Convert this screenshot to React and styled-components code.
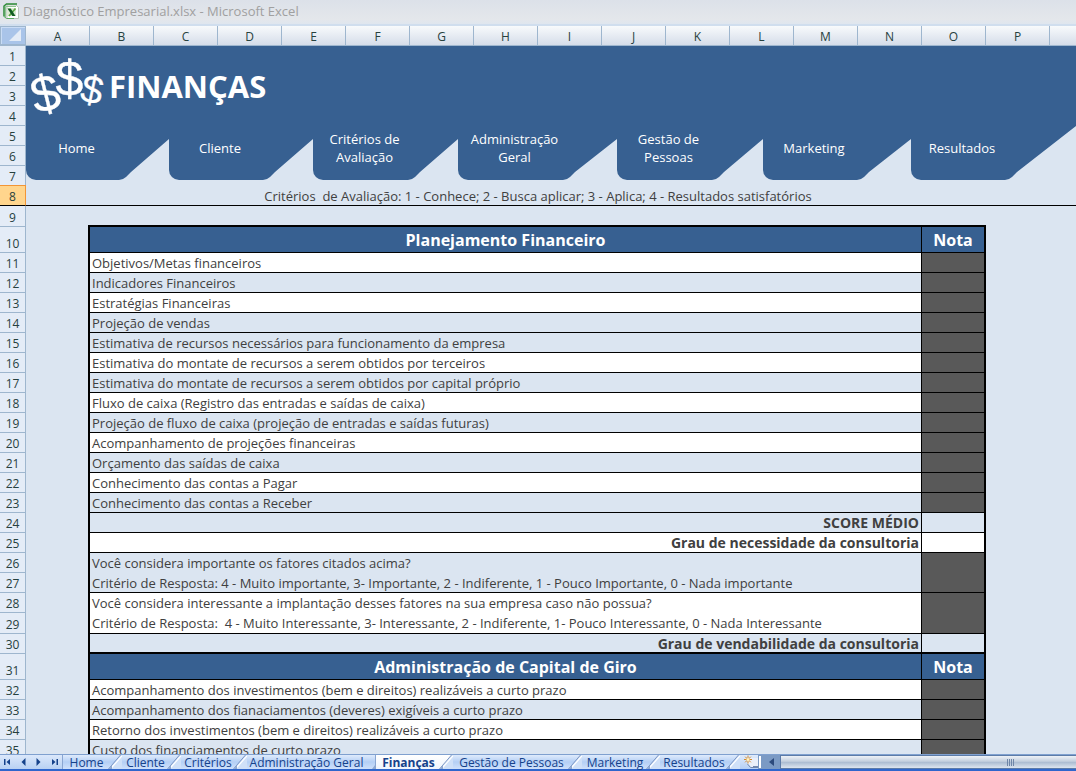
import React from 'react'
import styled, { createGlobalStyle, css } from 'styled-components'

const colors = {
  blue: '#376091',
  sheet: '#dbe5f1',
  header: '#e4ecf7',
  headerBorder: '#9eb6ce',
  headerText: '#27413e',
  text: '#404040',
  locked: '#595959'
}

// Column A | columns B to O | what is left of the sheet
const sheetColumns = '64fr 896fr 90fr'

const GlobalStyle = createGlobalStyle`
  * {
    box-sizing: border-box;
  }
  body {
    margin: 0;
    font-family: 'Open Sans', 'Noto Sans', sans-serif;
    color: ${colors.text};
    overflow: hidden;
  }
  button {
    font-family: inherit;
    border: 0;
    padding: 0;
    background: transparent;
    cursor: pointer;
  }
`

const Window = styled.div`
  display: flex;
  flex-direction: column;
  height: 100vh;
`

const TitleBar = styled.header`
  display: flex;
  flex: none;
  align-items: center;
  gap: 4px;
  height: 26px;
  padding: 0 3px 3px;
  background: linear-gradient(#dce1e9, #e4e7eb 80%, #dfe6ef);
  border-bottom: 2px solid #d0deee;
  color: #a0a0a0;
  font-size: 13px;
  line-height: 20px;
  white-space: nowrap;
`

const ColumnHeads = styled.div`
  display: flex;
  flex: none;
  height: 20px;
  background: linear-gradient(#f8fafc, #d5dde9);
  border-bottom: 1px solid ${colors.headerBorder};
`

const SelectAll = styled.button`
  display: flex;
  align-items: flex-end;
  justify-content: flex-end;
  width: 26px;
  padding: 0 4px 3px 0;
  background: #a9c4e9;
  border: 1px solid #9eb6ce;
  box-shadow: inset 1px 1px #c9dcf5;
`

const Letters = styled.div`
  display: grid;
  flex: 1;
  grid-template-columns: repeat(16, 64fr) 26fr;
`

const Letter = styled.div`
  border-right: ${props => (props.$last ? 0 : 1)}px solid
    ${colors.headerBorder};
  color: ${colors.headerText};
  font-size: 12px;
  line-height: 21px;
  text-align: center;
`

const Body = styled.main`
  display: flex;
  flex: 1;
  min-height: 0;
  overflow: hidden;
  background: ${colors.sheet};
`

const RowHeads = styled.div`
  flex: none;
  width: 26px;
`

const RowHead = styled.div`
  display: flex;
  align-items: flex-end;
  justify-content: center;
  height: ${props => props.$height}px;
  background: ${colors.header};
  border-right: 1px solid ${colors.headerBorder};
  border-bottom: 1px solid ${colors.headerBorder};
  color: ${colors.headerText};
  font-size: 12px;
  line-height: 16px;

  ${props =>
    props.$selected &&
    css`
      background: #ffd58d;
      border-right-color: #f29536;
      border-bottom-color: #000;
      box-shadow: 0 -1px #f29536;
    `}
`

const Sheet = styled.div`
  flex: 1;
  min-width: 0;
`

const Banner = styled.div`
  display: flex;
  align-items: center;
  gap: 6px;
  height: 80px;
  padding-left: 4px;
  background: ${colors.blue};
`

const BannerTitle = styled.h1`
  margin: 0;
  color: #fff;
  font-size: 31px;
  line-height: 40px;
  font-weight: 700;
`

const Nav = styled.nav`
  display: grid;
  grid-template-columns: 143fr 144fr 145fr 159fr 146fr 148fr 165fr;
  height: 54px;
`

const NavTab = styled.a`
  display: flex;
  align-items: flex-end;
  background: ${colors.blue};
  border-radius: 0 0 0 10px;
  color: #fff;
  font-size: 13px;
  line-height: 18px;
  text-align: center;
  text-decoration: none;
`

const NavLabel = styled.span`
  display: flex;
  flex: 1;
  align-self: stretch;
  align-items: center;
  justify-content: center;
  padding: 0 0 10px 8px;
`

const NavNotch = styled.span`
  flex: none;
  width: ${props => props.$width}px;
  height: ${props => props.$height}px;
  background: ${colors.sheet};
  clip-path: polygon(
    0 100%,
    4px calc(100% - 1px),
    7px calc(100% - 3px),
    12px calc(100% - 8px),
    100% 0,
    100% 100%
  );
`

const Legend = styled.div`
  display: grid;
  grid-template-columns: ${sheetColumns};
  height: 26px;
  padding-top: 7px;
  border-bottom: 1px solid #000;
`

const LegendText = styled.p`
  grid-column: 2;
  margin: 0;
  font-size: 13px;
  line-height: 18px;
  text-align: center;
  white-space: pre;
`

const TableArea = styled.div`
  display: grid;
  grid-template-columns: ${sheetColumns};
  padding-top: 19px;
`

const Table = styled.table`
  grid-column: 2;
  justify-self: end;
  width: calc(100% + 2px);
  table-layout: fixed;
  border: 2px solid #000;
  border-collapse: separate;
  border-spacing: 0;
  font-size: 13px;
  line-height: 18px;
`

const NotaCol = styled.col`
  width: 7.05%;
`

const Th = styled.th`
  height: 26px;
  padding: 1px 0 0;
  background: ${colors.blue};
  border-bottom: 1px solid #000;
  color: #fff;
  font-size: 16px;
  line-height: 24px;
  white-space: nowrap;

  & + & {
    border-left: 1px solid #000;
  }
`

const Td = styled.td`
  height: ${props => props.$height || 20}px;
  padding: 1px 2px 0;
  background: ${props => (props.$white ? '#fff' : colors.sheet)};
  border-bottom: ${props => (props.$thick ? 2 : 1)}px solid #000;
  white-space: pre;
  vertical-align: top;

  ${props => props.$open && 'border-bottom: 0;'}

  ${props =>
    props.$total &&
    css`
      padding-top: 2px;
      font-size: 14px;
      font-weight: 700;
      line-height: 16px;
      text-align: right;
    `}
`

const NotaCell = styled(Td)`
  border-left: 1px solid #000;
  ${props => props.$locked && `background: ${colors.locked};`}
`

const Footer = styled.footer`
  display: flex;
  flex: none;
  height: 17px;
  background: #7b9ac4;
  border-top: 1px solid #7fa0cf;
  border-bottom: 2px solid #2f66cc;
`

const TabScroll = styled.div`
  display: flex;
  align-items: center;
  justify-content: space-around;
  width: 63px;
  background: linear-gradient(#dbe8fb, #b8d1f3);
  border-right: 1px solid #8aa6d2;
`

const TabScrollButton = styled.button`
  display: flex;
`

const SheetTabs = styled.div`
  display: flex;
`

const SheetTab = styled.button`
  display: flex;
  align-items: stretch;
  width: ${props => props.$width}px;
  background: ${props =>
    props.$active
      ? 'linear-gradient(#fff, #eef4fd)'
      : 'linear-gradient(#dfebfc, #b4cff5 50%, #cfe1fb)'};
  color: #15428b;
  font-size: 12px;
  font-weight: ${props => (props.$active ? 700 : 400)};
  line-height: 15px;
  white-space: nowrap;
`

const SheetTabLabel = styled.span`
  flex: 1;
  padding-left: 2px;
`

const NewSheet = styled.button`
  display: flex;
  align-items: center;
  justify-content: flex-end;
  width: 18px;
  background: linear-gradient(#dfebfc, #b4cff5);
`

const Splitter = styled.div`
  width: 4px;
  background: #fff;
  border: 1px solid #7b9ac4;
`

const ScrollLeft = styled.button`
  display: flex;
  align-items: center;
  justify-content: center;
  width: 18px;
`

const ScrollThumb = styled.div`
  display: flex;
  flex: 1;
  align-items: center;
  justify-content: center;
  padding-left: 164px;
  background: linear-gradient(#eef2f7, #c3cfde 45%, #a9bad0 50%, #dde5ef);
  border: 1px solid #5c7ba8;
  border-right: 0;
`

const ExcelIcon = () => (
  <svg width="16" height="16" viewBox="0 0 16 16" aria-hidden="true">
    <path d="M4 2h9l2.500 2.500V15.500H4z" fill="#fff" stroke="#b9c4b9" />
    <path d="M1 13.500V3l2.500-2H14" fill="none" stroke="#2c8a36" strokeWidth="1.5" />
    <path d="M2.500 14.500V3.500H13" fill="none" stroke="#8cc48f" />
    <path d="M1 13.500l2.500 2H11" fill="none" stroke="#5da863" />
    <rect x="4" y="5" width="9" height="8" fill="#dcebd3" />
    <path d="M12.500 5.500L6 13" stroke="#5ba843" strokeWidth="1.8" />
    <path d="M4.500 5.500h3.200l4.800 7.500H9.300z" fill="#125c22" />
  </svg>
)

const MoneyIcon = () => (
  <svg
    width="73"
    height="70"
    viewBox="0 0 73 70"
    overflow="visible"
    aria-hidden="true"
  >
    <g
      fill="#fff"
      stroke="#fff"
      strokeWidth=".3"
      fontFamily="'Liberation Sans', Arial, sans-serif"
      textAnchor="middle"
    >
      <text fontSize="51" transform="translate(15.5 43) rotate(-14)" y="17">
        $
      </text>
      <text fontSize="50" x="39.500" y="45">
        $
      </text>
      <text fontSize="39" transform="translate(62 39) rotate(12)" y="13">
        $
      </text>
    </g>
  </svg>
)

const Slant = () => (
  <svg width="14" height="14" viewBox="0 0 14 14" aria-hidden="true">
    <path d="M1 14L13 0h1v14z" fill="#cfe0f8" />
    <path d="M2.500 14L14 .8" stroke="#fff" strokeWidth="1.2" fill="none" />
    <path d="M.5 14L12.500 0" stroke="#7b96c4" fill="none" />
    <path d="M1 14l3-4v4z" fill="#8fa9d2" />
  </svg>
)

// Right edge of the tab that the active one lies over
const CoveredEdge = () => (
  <svg width="12" height="14" viewBox="0 0 12 14" aria-hidden="true">
    <path d="M11.500 0v14" stroke="#8aa6d2" />
    <path d="M11 10v4H8z" fill="#8fa9d2" />
  </svg>
)

const Arrow = ({ d }) => (
  <svg width="9" height="8" viewBox="0 0 9 8" aria-hidden="true">
    <path d={d} fill="#15428b" />
  </svg>
)

const NewSheetIcon = () => (
  <svg width="15" height="14" viewBox="0 0 15 14" aria-hidden="true">
    <path d="M5 3h10v9H8L5 9z" fill="#e9effa" />
    <path d="M4.500 9l3 3.500H11" fill="none" stroke="#7189b0" />
    <path d="M10 11h5v2h-5z" fill="#7189b0" />
    <path
      d="M5 .5v8M1 4.500h8M2.200 1.700l5.600 5.600M7.800 1.700L2.200 7.300"
      stroke="#d58a2b"
    />
    <circle cx="5" cy="4.500" r="1.500" fill="#fff3c4" />
  </svg>
)

const letters = 'ABCDEFGHIJKLMNOP'.split('')

const rowHeights = { 9: 21, 10: 26, 29: 21, 31: 26 }

const navTabs = [
  { lines: ['Home'], notch: 50 },
  { lines: ['Cliente'], notch: 50 },
  { lines: ['Critérios de', 'Avaliação'], notch: 50 },
  { lines: ['Administração', 'Geral'], notch: 54 },
  { lines: ['Gestão de', 'Pessoas'], notch: 51 },
  { lines: ['Marketing'], notch: 54 },
  { lines: ['Resultados'], notch: 71, notchHeight: 54 }
]

// `open` rows share their Nota cell with the row below
const planning = [
  { text: 'Objetivos/Metas financeiros', white: true },
  { text: 'Indicadores Financeiros' },
  { text: 'Estratégias Financeiras', white: true },
  { text: 'Projeção de vendas' },
  { text: 'Estimativa de recursos necessários para funcionamento da empresa' },
  {
    text: 'Estimativa do montate de recursos a serem obtidos por terceiros',
    white: true
  },
  {
    text: 'Estimativa do montate de recursos a serem obtidos por capital próprio'
  },
  {
    text: 'Fluxo de caixa (Registro das entradas e saídas de caixa)',
    white: true
  },
  {
    text: 'Projeção de fluxo de caixa (projeção de entradas e saídas futuras)'
  },
  { text: 'Acompanhamento de projeções financeiras', white: true },
  { text: 'Orçamento das saídas de caixa' },
  { text: 'Conhecimento das contas a Pagar', white: true },
  { text: 'Conhecimento das contas a Receber' },
  { text: 'SCORE MÉDIO', total: true },
  { text: 'Grau de necessidade da consultoria', total: true, white: true },
  { text: 'Você considera importante os fatores citados acima?', open: true },
  {
    text:
      'Critério de Resposta: 4 - Muito importante, 3- Importante, 2 - Indiferente, 1 - Pouco Importante, 0 - Nada importante',
    merged: true
  },
  {
    text:
      'Você considera interessante a implantação desses fatores na sua empresa caso não possua?',
    open: true,
    white: true
  },
  {
    text:
      'Critério de Resposta:  4 - Muito Interessante, 3- Interessante, 2 - Indiferente, 1- Pouco Interessante, 0 - Nada Interessante',
    merged: true,
    height: 21,
    white: true
  },
  { text: 'Grau de vendabilidade da consultoria', total: true, thick: true }
]

const workingCapital = [
  {
    text:
      'Acompanhamento dos investimentos (bem e direitos) realizáveis a curto prazo',
    white: true
  },
  { text: 'Acompanhamento dos fianaciamentos (deveres) exigíveis a curto prazo' },
  {
    text: 'Retorno dos investimentos (bem e direitos) realizáveis a curto prazo',
    white: true
  },
  { text: 'Custo dos financiamentos de curto prazo' }
]

const sheetTabs = [
  { name: 'Home', width: 59 },
  { name: 'Cliente', width: 59 },
  { name: 'Critérios', width: 66 },
  { name: 'Administração Geral', width: 129 },
  { name: 'Finanças', width: 77, active: true },
  { name: 'Gestão de Pessoas', width: 129 },
  { name: 'Marketing', width: 78 },
  { name: 'Resultados', width: 80 }
]

const TitleRow = ({ title }) => (
  <tr>
    <Th scope="col">{title}</Th>
    <Th scope="col">Nota</Th>
  </tr>
)

const CriteriaRow = ({ text, white, total, thick, height, open, merged }) => (
  <tr>
    <Td
      $white={white}
      $total={total}
      $thick={thick}
      $height={height}
      $open={open}
    >
      {text}
    </Td>
    {!merged && (
      <NotaCell
        rowSpan={open ? 2 : 1}
        $white={white}
        $thick={thick}
        $locked={!total}
      />
    )}
  </tr>
)

const App = () => (
  <Window>
    <GlobalStyle />
    <TitleBar>
      <ExcelIcon />
      Diagnóstico Empresarial.xlsx - Microsoft Excel
    </TitleBar>
    <ColumnHeads>
      <SelectAll aria-label="Selecionar tudo">
        <svg width="12" height="12" viewBox="0 0 12 12" aria-hidden="true">
          <path d="M12 0v12H0z" fill="#e3ebf6" />
        </svg>
      </SelectAll>
      <Letters>
        {letters.map(letter => (
          <Letter key={letter}>{letter}</Letter>
        ))}
        <Letter $last />
      </Letters>
    </ColumnHeads>
    <Body>
      <RowHeads>
        {Array.from({ length: 35 }, (_, i) => i + 1).map(n => (
          <RowHead key={n} $height={rowHeights[n] || 20} $selected={n === 8}>
            {n}
          </RowHead>
        ))}
      </RowHeads>
      <Sheet>
        <Banner>
          <MoneyIcon />
          <BannerTitle>FINANÇAS</BannerTitle>
        </Banner>
        <Nav>
          {navTabs.map(({ lines, notch, notchHeight }) => (
            <NavTab key={lines[0]} href="#">
              <NavLabel>
                <span>
                  {lines[0]}
                  {lines[1] && <br />}
                  {lines[1]}
                </span>
              </NavLabel>
              <NavNotch $width={notch} $height={notchHeight || 41} />
            </NavTab>
          ))}
        </Nav>
        <Legend>
          <LegendText>
            {
              'Critérios  de Avaliação: 1 - Conhece; 2 - Busca aplicar; 3 - Aplica; 4 - Resultados satisfatórios'
            }
          </LegendText>
        </Legend>
        <TableArea>
          <Table>
            <colgroup>
              <col />
              <NotaCol />
            </colgroup>
            <tbody>
              <TitleRow title="Planejamento Financeiro" />
              {planning.map(row => (
                <CriteriaRow key={row.text} {...row} />
              ))}
              <TitleRow title="Administração de Capital de Giro" />
              {workingCapital.map(row => (
                <CriteriaRow key={row.text} {...row} />
              ))}
            </tbody>
          </Table>
        </TableArea>
      </Sheet>
    </Body>
    <Footer>
      <TabScroll>
        <TabScrollButton aria-label="Primeira planilha">
          <Arrow d="M1 1h1.500v6H1zM7 1v6L3.500 4z" />
        </TabScrollButton>
        <TabScrollButton aria-label="Planilha anterior">
          <Arrow d="M6.500 0v8l-4-4z" />
        </TabScrollButton>
        <TabScrollButton aria-label="Próxima planilha">
          <Arrow d="M2.500 0v8l4-4z" />
        </TabScrollButton>
        <TabScrollButton aria-label="Última planilha">
          <Arrow d="M6.500 1H8v6H6.500zM2 1v6l3.500-3z" />
        </TabScrollButton>
      </TabScroll>
      <SheetTabs>
        {sheetTabs.map(({ name, width, active }, i) => {
          const next = sheetTabs[i + 1]
          return (
            <SheetTab key={name} $width={width} $active={active}>
              <SheetTabLabel>{name}</SheetTabLabel>
              {next && next.active ? <CoveredEdge /> : <Slant />}
            </SheetTab>
          )
        })}
      </SheetTabs>
      <NewSheet aria-label="Inserir planilha">
        <NewSheetIcon />
      </NewSheet>
      <Splitter />
      <ScrollLeft aria-label="Rolar para a esquerda">
        <svg width="5" height="8" viewBox="0 0 5 8" aria-hidden="true">
          <path d="M5 0v8L0 4z" fill="#2c4a7c" />
        </svg>
      </ScrollLeft>
      <ScrollThumb>
        <svg width="8" height="7" viewBox="0 0 8 7" aria-hidden="true">
          <path d="M.5 0v7M2.500 0v7M4.500 0v7M6.500 0v7" stroke="#6f86a8" />
        </svg>
      </ScrollThumb>
    </Footer>
  </Window>
)

export default App
